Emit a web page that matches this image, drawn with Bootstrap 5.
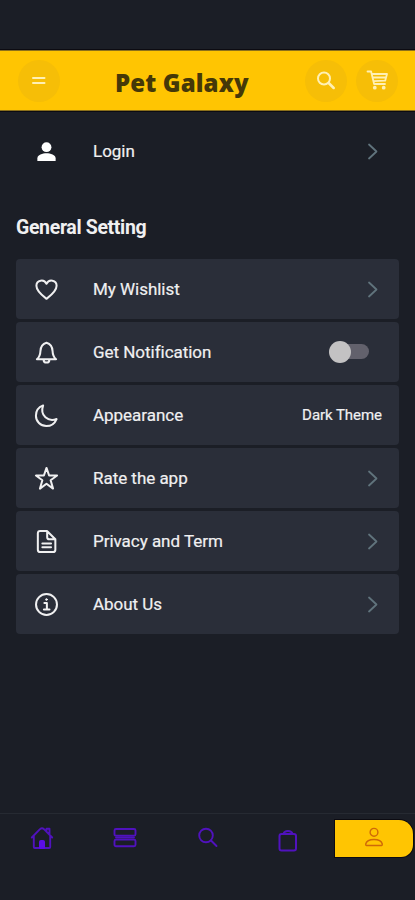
<!DOCTYPE html>
<html lang="en">
<head>
<meta charset="utf-8">
<meta name="viewport" content="width=device-width, initial-scale=1">
<title>Pet Galaxy</title>
<link href="https://cdn.jsdelivr.net/npm/bootstrap@5.3.0/dist/css/bootstrap.min.css" rel="stylesheet">
<style>
body{background:#1b1e26;color:#f0f0f1;font-family:Roboto,"Liberation Sans",sans-serif;font-size:17px}
.screen{height:900px;padding-top:50px;overflow:hidden}
svg{display:block;flex:none;fill:none;stroke:currentColor;stroke-linecap:round;stroke-linejoin:round}
.topbar{height:61px;background:#ffc502;border-top:1px solid #8b701b;border-bottom:1px solid #8b701b;box-shadow:0 0 0 1px #0c0b12;padding:0 17px 0 18px}
.brand{font:900 24px/34px "Noto Sans","Open Sans",sans-serif;letter-spacing:.12px;color:#453808;margin:4px 0 0 55px;white-space:nowrap}
.round{width:42px;height:42px;background:#f6be07;color:#fff0b5}
.line{height:60px;padding:0 17px 0 17.500px}
.line>svg:first-child{width:25px;height:25px;margin:0 34.500px 0 0}
.line>span:not(.toggle):not(.theme-name){letter-spacing:-.03px;padding-top:1px;-webkit-text-stroke:.2px currentColor}
.rows .line{background:#2a2e39;border-radius:4px}
.rows{gap:3px;margin-top:19px}
.section-title{font-size:19.5px;line-height:24px;font-weight:700;margin:35px 0 0;letter-spacing:-.35px}
.chev{color:#60737c;width:18px;height:19px}
.theme-name{font-size:15px;letter-spacing:-.05px;-webkit-text-stroke:.2px currentColor}
.toggle{width:40px;height:22px;padding:3px 0 4px 11px;margin-right:13px;position:relative}
.toggle .track{display:block;height:15px;background:#62616c;border-radius:8px}
.toggle .knob{position:absolute;left:0;top:0;width:22px;height:22px;border-radius:50%;background:#c3c2c3}
.bottombar{height:87px;border-top:1px solid #262a32;padding:6px 2px 0 0;color:#5012bd}
.tab{height:37px;width:83px;padding-bottom:2px}
.tab-bag{padding:4px 5px 0 0}
.tab-on{width:78px;padding:0 1px 3px 0;background:#ffc502;color:#cf6908;border-radius:0 14px 12px 0;box-shadow:0 0 0 1px #0c0b12}
</style>
<script src="https://cdn.jsdelivr.net/npm/bootstrap@5.3.0/dist/js/bootstrap.bundle.min.js"></script>
</head>
<body>
<div class="screen d-flex flex-column">
  <header class="topbar d-flex align-items-center">
    <button class="round btn border-0 rounded-circle p-0 d-flex align-items-center justify-content-center" aria-label="Menu">
      <svg width="16" height="12" viewBox="0 0 16 12" stroke-width="2"><path d="M2 3h11.500M2 8h11.500"/></svg>
    </button>
    <h1 class="brand">Pet Galaxy</h1>
    <div class="d-flex ms-auto" style="gap:9px">
      <button class="round btn border-0 rounded-circle p-0 d-flex align-items-center justify-content-center" aria-label="Search">
        <svg width="20" height="20" viewBox="0 0 20 20" stroke-width="2"><circle cx="8" cy="7.500" r="6"/><path d="M12.700 12l5 5" stroke-width="2.500"/></svg>
      </button>
      <button class="round btn border-0 rounded-circle p-0 d-flex align-items-center justify-content-center" aria-label="Cart">
        <svg width="22" height="22" viewBox="0 0 22 22" stroke-width="1.800"><path d="M1.500 1.500h3.600l3 12.500H19M5.800 4H21l-1.800 6.700-11.700.4M7.500 7.500H20"/><circle cx="8.800" cy="17.700" r="1" fill="currentColor"/><circle cx="17.700" cy="17.700" r="1" fill="currentColor"/></svg>
      </button>
    </div>
  </header>
  <main class="flex-grow-1 px-3" style="padding-top:10px">
    <div class="line d-flex align-items-center">
      <svg viewBox="0 0 26 26"><g fill="#fff" stroke="none"><circle cx="13" cy="8.500" r="5.100"/><path d="M3.500 22.800v-2.800c0-3.400 5.400-5.200 9.500-5.200s9.500 1.800 9.500 5.200v2.800z"/></g></svg>
      <span>Login</span>
      <svg class="chev ms-auto" viewBox="0 0 18 19" stroke-width="1.800"><path d="M5 2.500l7.500 7-7.500 7"/></svg>
    </div>
    <h2 class="section-title">General Setting</h2>
    <div class="rows d-flex flex-column">
      <div class="line d-flex align-items-center">
        <svg viewBox="0 0 26 26" stroke-width="2.100"><path d="M13 22.700C9.200 19.800 2.500 15 2.500 9.200c0-6.300 8-7.400 10.500-2.200 2.500-5.200 10.500-4.100 10.500 2.200 0 5.800-6.700 10.600-10.500 13.500z"/></svg>
        <span>My Wishlist</span>
        <svg class="chev ms-auto" viewBox="0 0 18 19" stroke-width="1.800"><path d="M5 2.500l7.500 7-7.500 7"/></svg>
      </div>
      <div class="line d-flex align-items-center">
        <svg viewBox="0 0 26 26" stroke-width="2.100"><path d="M3 20c2.500-1.800 3.500-3.500 3.700-8.500.2-4.500 2-7.500 6.300-8.700 4.300 1.200 6.100 4.200 6.300 8.700.2 5 1.200 6.700 3.700 8.500zM10 20.500c0 4 6 4 6 0"/></svg>
        <span>Get Notification</span>
        <span class="toggle ms-auto"><span class="track"></span><span class="knob"></span></span>
      </div>
      <div class="line d-flex align-items-center">
        <svg viewBox="0 0 26 26" stroke-width="2.100"><path d="M9.500 2.500C4.800 4.300 2 8.500 2 13.200 2 19.200 6.800 24 12.800 24c4.700 0 8.800-2.800 10.700-7.300-8.500 3.300-17.800-3.300-14-14.200z"/></svg>
        <span>Appearance</span>
        <span class="theme-name ms-auto">Dark Theme</span>
      </div>
      <div class="line d-flex align-items-center">
        <svg viewBox="0 0 26 26" stroke-width="2.100"><path d="M13 2l2.700 7.900h8.300l-6.700 4.900 2.500 8.700-6.800-5.100-6.800 5.100 2.500-8.700L2 9.900h8.300z"/></svg>
        <span>Rate the app</span>
        <svg class="chev ms-auto" viewBox="0 0 18 19" stroke-width="1.800"><path d="M5 2.500l7.500 7-7.500 7"/></svg>
      </div>
      <div class="line d-flex align-items-center">
        <svg viewBox="0 0 26 26" stroke-width="2.100"><path d="M6.500 2h7l8.700 8.700v10.800q0 2.500-2.500 2.500H6.500q-2.500 0-2.500-2.500V4.500Q4 2 6.500 2zM13.700 2.500v6q0 2.200 2.200 2.200h6M8.700 15h9M8.700 19h9"/></svg>
        <span>Privacy and Term</span>
        <svg class="chev ms-auto" viewBox="0 0 18 19" stroke-width="1.800"><path d="M5 2.500l7.500 7-7.500 7"/></svg>
      </div>
      <div class="line d-flex align-items-center">
        <svg viewBox="0 0 26 26" stroke-width="2.100"><circle cx="13" cy="13" r="10.900"/><path d="M10.800 11.500h2.600v6.500M10.300 18.200h5.800"/><circle cx="13" cy="7.800" r=".9" fill="currentColor" stroke-width="1"/></svg>
        <span>About Us</span>
        <svg class="chev ms-auto" viewBox="0 0 18 19" stroke-width="1.800"><path d="M5 2.500l7.500 7-7.500 7"/></svg>
      </div>
    </div>
  </main>
  <nav class="bottombar d-flex" aria-label="Main">
    <div class="tab d-flex align-items-center justify-content-center">
      <svg width="24" height="24" viewBox="0 0 24 24" stroke-width="1.900"><path d="M1.800 11.500L10 3.200q2-1.700 4 0l8.200 8.300M3.800 10v11q0 1 1 1h14.400q1 0 1-1V10M16.500 4.500V2.800h3v5"/><path d="M9.500 22v-6.500q0-1 1-1h3q1 0 1 1V22z" fill="#5b0ee6" stroke="#5b0ee6" stroke-width="1"/></svg>
    </div>
    <div class="tab d-flex align-items-center justify-content-center">
      <svg width="24" height="22" viewBox="0 0 24 22" stroke-width="1.900"><rect x="1.500" y="2" width="21" height="6.700" rx="1.500"/><rect x="1.500" y="12.600" width="21" height="6.700" rx="1.500"/><path d="M3 10.600h18"/></svg>
    </div>
    <div class="tab d-flex align-items-center justify-content-center">
      <svg width="22" height="22" viewBox="0 0 22 22" stroke-width="1.900"><circle cx="9" cy="8.500" r="6.800"/><path d="M14 13.500l5.500 5.500"/></svg>
    </div>
    <div class="tab tab-bag d-flex align-items-center justify-content-center">
      <svg width="22" height="24" viewBox="0 0 22 24" stroke-width="2"><rect x="2.500" y="5" width="16.500" height="16.500" rx="2"/><path d="M6.500 5c1-4 8-4 9 0"/></svg>
    </div>
    <div class="tab tab-on ms-auto d-flex align-items-center justify-content-center">
      <svg width="20" height="20" viewBox="0 0 20 20" stroke-width="1.400"><circle cx="10" cy="5.300" r="3.900"/><path d="M2.500 18.500q-1-.2-.8-1.500c.8-3 4.300-4.500 8.300-4.500s7.500 1.500 8.300 4.500q.2 1.300-.8 1.500z"/></svg>
    </div>
  </nav>
</div>
</body>
</html>
